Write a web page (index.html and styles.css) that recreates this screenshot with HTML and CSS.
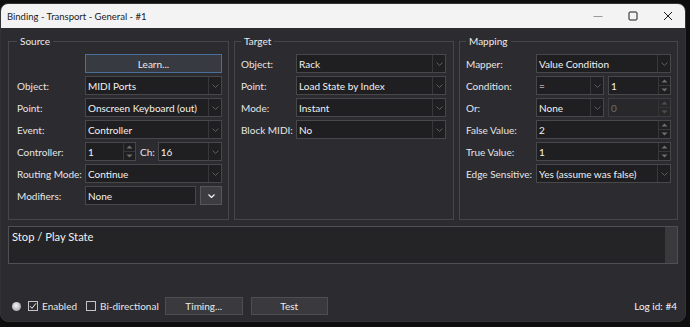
FILE: index.html
```html
<!DOCTYPE html>
<html>
<head>
<meta charset="utf-8">
<link rel="stylesheet" href="styles.css">
</head>
<body>
<div class="window">
  <div class="titlebar">
    <span class="title">Binding - Transport - General - #1</span>
    <div class="caption-buttons">
      <span class="cap-btn"><svg width="10" height="10" viewBox="0 0 10 10"><path d="M0.5 5.5h9" stroke="#9a9a9a" stroke-width="1"/></svg></span>
      <span class="cap-btn"><svg width="10" height="10" viewBox="0 0 10 10"><rect x="1" y="1" width="8" height="8" rx="1" fill="none" stroke="#1a1a1a" stroke-width="1"/></svg></span>
      <span class="cap-btn"><svg width="10" height="10" viewBox="0 0 10 10"><path d="M1 1l8 8M9 1l-8 8" stroke="#1a1a1a" stroke-width="1"/></svg></span>
    </div>
  </div>
  <div class="content">
    <div class="groups">
      <fieldset class="group g-source">
        <legend>Source</legend>
        <div class="form">
          <span></span>
          <div class="btn learn">Learn...</div>
          <span class="lbl">Object:</span>
          <div class="combo"><span class="val">MIDI Ports</span><span class="arrow"><svg width="7" height="4" viewBox="0 0 7 4"><path d="M0.5 0.5L3.5 3.5L6.5 0.5" fill="none" stroke="#5e5e5e"/></svg></span></div>
          <span class="lbl">Point:</span>
          <div class="combo"><span class="val">Onscreen Keyboard (out)</span><span class="arrow"><svg width="7" height="4" viewBox="0 0 7 4"><path d="M0.5 0.5L3.5 3.5L6.5 0.5" fill="none" stroke="#5e5e5e"/></svg></span></div>
          <span class="lbl">Event:</span>
          <div class="combo"><span class="val">Controller</span><span class="arrow"><svg width="7" height="4" viewBox="0 0 7 4"><path d="M0.5 0.5L3.5 3.5L6.5 0.5" fill="none" stroke="#5e5e5e"/></svg></span></div>
          <span class="lbl">Controller:</span>
          <div class="split">
            <div class="spin w-ctrl"><span class="val">1</span><span class="spin-btns"><span class="up"><svg width="7" height="4" viewBox="0 0 7 4"><path d="M0.5 3.5L3.5 0.5L6.5 3.5Z" fill="#6e6e6e"/></svg></span><span class="down"><svg width="7" height="4" viewBox="0 0 7 4"><path d="M0.5 0.5L3.5 3.5L6.5 0.5Z" fill="#6e6e6e"/></svg></span></span></div>
            <span class="lbl ch">Ch:</span>
            <div class="combo grow"><span class="val">16</span><span class="arrow"><svg width="7" height="4" viewBox="0 0 7 4"><path d="M0.5 0.5L3.5 3.5L6.5 0.5" fill="none" stroke="#5e5e5e"/></svg></span></div>
          </div>
          <span class="lbl">Routing Mode:</span>
          <div class="combo"><span class="val">Continue</span><span class="arrow"><svg width="7" height="4" viewBox="0 0 7 4"><path d="M0.5 0.5L3.5 3.5L6.5 0.5" fill="none" stroke="#5e5e5e"/></svg></span></div>
          <span class="lbl">Modifiers:</span>
          <div class="split">
            <div class="field grow"><span class="val">None</span></div>
            <div class="btn drop"><svg width="7" height="4" viewBox="0 0 7 4"><path d="M0.5 0.5L3.5 3.5L6.5 0.5" fill="none" stroke="#f0f0f0" stroke-width="1.2"/></svg></div>
          </div>
        </div>
      </fieldset>
      <fieldset class="group g-target">
        <legend>Target</legend>
        <div class="form">
          <span class="lbl">Object:</span>
          <div class="combo"><span class="val">Rack</span><span class="arrow"><svg width="7" height="4" viewBox="0 0 7 4"><path d="M0.5 0.5L3.5 3.5L6.5 0.5" fill="none" stroke="#5e5e5e"/></svg></span></div>
          <span class="lbl">Point:</span>
          <div class="combo"><span class="val">Load State by Index</span><span class="arrow"><svg width="7" height="4" viewBox="0 0 7 4"><path d="M0.5 0.5L3.5 3.5L6.5 0.5" fill="none" stroke="#5e5e5e"/></svg></span></div>
          <span class="lbl">Mode:</span>
          <div class="combo"><span class="val">Instant</span><span class="arrow"><svg width="7" height="4" viewBox="0 0 7 4"><path d="M0.5 0.5L3.5 3.5L6.5 0.5" fill="none" stroke="#5e5e5e"/></svg></span></div>
          <span class="lbl">Block MIDI:</span>
          <div class="combo"><span class="val">No</span><span class="arrow"><svg width="7" height="4" viewBox="0 0 7 4"><path d="M0.5 0.5L3.5 3.5L6.5 0.5" fill="none" stroke="#5e5e5e"/></svg></span></div>
        </div>
      </fieldset>
      <fieldset class="group g-mapping">
        <legend>Mapping</legend>
        <div class="form">
          <span class="lbl">Mapper:</span>
          <div class="combo"><span class="val">Value Condition</span><span class="arrow"><svg width="7" height="4" viewBox="0 0 7 4"><path d="M0.5 0.5L3.5 3.5L6.5 0.5" fill="none" stroke="#5e5e5e"/></svg></span></div>
          <span class="lbl">Condition:</span>
          <div class="split">
            <div class="combo w-small"><span class="val">=</span><span class="arrow"><svg width="7" height="4" viewBox="0 0 7 4"><path d="M0.5 0.5L3.5 3.5L6.5 0.5" fill="none" stroke="#5e5e5e"/></svg></span></div>
            <div class="spin grow"><span class="val">1</span><span class="spin-btns"><span class="up"><svg width="7" height="4" viewBox="0 0 7 4"><path d="M0.5 3.5L3.5 0.5L6.5 3.5Z" fill="#6e6e6e"/></svg></span><span class="down"><svg width="7" height="4" viewBox="0 0 7 4"><path d="M0.5 0.5L3.5 3.5L6.5 0.5Z" fill="#6e6e6e"/></svg></span></span></div>
          </div>
          <span class="lbl">Or:</span>
          <div class="split">
            <div class="combo w-small"><span class="val">None</span><span class="arrow"><svg width="7" height="4" viewBox="0 0 7 4"><path d="M0.5 0.5L3.5 3.5L6.5 0.5" fill="none" stroke="#5e5e5e"/></svg></span></div>
            <div class="spin grow disabled"><span class="val">0</span><span class="spin-btns"><span class="up"><svg width="7" height="4" viewBox="0 0 7 4"><path d="M0.5 3.5L3.5 0.5L6.5 3.5Z" fill="#4e4e4e"/></svg></span><span class="down"><svg width="7" height="4" viewBox="0 0 7 4"><path d="M0.5 0.5L3.5 3.5L6.5 0.5Z" fill="#4e4e4e"/></svg></span></span></div>
          </div>
          <span class="lbl">False Value:</span>
          <div class="spin"><span class="val">2</span><span class="spin-btns"><span class="up"><svg width="7" height="4" viewBox="0 0 7 4"><path d="M0.5 3.5L3.5 0.5L6.5 3.5Z" fill="#6e6e6e"/></svg></span><span class="down"><svg width="7" height="4" viewBox="0 0 7 4"><path d="M0.5 0.5L3.5 3.5L6.5 0.5Z" fill="#6e6e6e"/></svg></span></span></div>
          <span class="lbl">True Value:</span>
          <div class="spin"><span class="val">1</span><span class="spin-btns"><span class="up"><svg width="7" height="4" viewBox="0 0 7 4"><path d="M0.5 3.5L3.5 0.5L6.5 3.5Z" fill="#6e6e6e"/></svg></span><span class="down"><svg width="7" height="4" viewBox="0 0 7 4"><path d="M0.5 0.5L3.5 3.5L6.5 0.5Z" fill="#6e6e6e"/></svg></span></span></div>
          <span class="lbl">Edge Sensitive:</span>
          <div class="combo"><span class="val">Yes (assume was false)</span><span class="arrow"><svg width="7" height="4" viewBox="0 0 7 4"><path d="M0.5 0.5L3.5 3.5L6.5 0.5" fill="none" stroke="#5e5e5e"/></svg></span></div>
        </div>
      </fieldset>
    </div>
    <div class="desc">
      <span class="desc-text">Stop / Play State</span>
      <span class="scrollbar"></span>
    </div>
    <div class="footer">
      <span class="led"></span>
      <span class="check on"><svg width="8" height="8" viewBox="0 0 8 8"><path d="M1 4.2L3 6.3L7 1.3" fill="none" stroke="#f0f0f0" stroke-width="1"/></svg></span>
      <span class="check-lbl">Enabled</span>
      <span class="check bidir"></span>
      <span class="check-lbl">Bi-directional</span>
      <div class="btn foot-btn timing">Timing...</div>
      <div class="btn foot-btn test">Test</div>
      <span class="logid">Log id: #4</span>
    </div>
  </div>
</div>
</body>
</html>
```

FILE: styles.css
```css
* { box-sizing: border-box; }
html, body { margin: 0; padding: 0; background: #0e0e0f; }
body {
  width: 690px;
  height: 327px;
  overflow: hidden;
  font-family: Lato, "Noto Sans", sans-serif;
  font-size: 10px;
  color: #e6e6e6;
}
.window {
  margin: 3px 4px 0 0;
  width: 686px;
  height: 319px;
  border: 1px solid #333336;
  border-radius: 8px;
  overflow: hidden;
  background: #2c2b30;
  display: flex;
  flex-direction: column;
}
.titlebar {
  flex: none;
  height: 24px;
  background: #f3f3f3;
  color: #1b1b1b;
  display: flex;
  align-items: center;
}
.title { padding-left: 6px; font-size: 9.5px; }
.caption-buttons { margin-left: auto; display: flex; height: 100%; }
.cap-btn { width: 35px; display: flex; align-items: center; justify-content: center; }
.content {
  flex: 1;
  display: flex;
  flex-direction: column;
  padding: 6px 7px 6px 7px;
}
.groups {
  display: grid;
  grid-template-columns: 221px 220px 219px;
  column-gap: 5px;
}
.group {
  margin: 0;
  min-width: 0;
  border: 1px solid #47474b;
  padding: 6px 6px 14px 6px;
}
.g-source { padding-left: 8px; }
.group legend {
  padding: 0 3px;
  line-height: 14px;
  color: #ececec;
}
.form {
  display: grid;
  grid-auto-rows: 19px;
  row-gap: 3px;
  align-items: stretch;
}
.g-source .form { grid-template-columns: 68px 137px; }
.g-target .form { grid-template-columns: 55px 150px; }
.g-mapping .form { grid-template-columns: 70px 135px; }
.lbl { display: flex; align-items: center; white-space: nowrap; }
.combo, .spin, .field {
  display: flex;
  align-items: stretch;
  background: #1f1f21;
  border: 1px solid #48484b;
  min-width: 0;
}
.val {
  flex: 1;
  display: flex;
  align-items: center;
  padding-left: 2px;
  white-space: nowrap;
  overflow: hidden;
  color: #f2f2f2;
}
.arrow {
  width: 13px;
  border-left: 1px solid #38383b;
  display: flex;
  align-items: center;
  justify-content: center;
}
.spin-btns {
  width: 12px;
  border-left: 1px solid #38383b;
  display: flex;
  flex-direction: column;
}
.spin-btns .up, .spin-btns .down {
  flex: 1;
  display: flex;
  align-items: center;
  justify-content: center;
}
.spin-btns .up { border-bottom: 1px solid #38383b; }
.spin.disabled { background: #28282b; border-color: #3d3d40; }
.spin.disabled .val { color: #6c6c6c; }
.spin.disabled .spin-btns, .spin.disabled .spin-btns .up { border-color: #333336; }
.split { display: flex; align-items: stretch; min-width: 0; }
.grow { flex: 1; }
.w-ctrl { width: 51px; flex: none; }
.ch { padding: 0 3px 0 4px; }
.w-small { width: 68px; flex: none; margin-right: 4px; }
.btn {
  display: flex;
  align-items: center;
  justify-content: center;
  background: #3a3a3e;
  border: 1px solid #4e4e52;
  color: #ececec;
}
.learn {
  background: #373a41;
  border-color: #4a6f99;
}
.drop {
  width: 22px;
  margin-left: 4px;
  background: #3d3d41;
  border-color: #57575b;
}
.desc {
  margin-top: 6px;
  height: 38px;
  display: flex;
  background: #242426;
  border: 1px solid #505054;
}
.desc-text {
  flex: 1;
  padding: 2px 0 0 3px;
  font-size: 11.2px;
  line-height: 15px;
  color: #f0f0f0;
}
.scrollbar { width: 12px; background: #3a3a3d; }
.footer {
  margin-top: auto;
  height: 18px;
  display: flex;
  align-items: center;
}
.led {
  width: 9px;
  height: 9px;
  margin-left: 4px;
  border-radius: 50%;
  background: radial-gradient(circle at 45% 40%, #f4f4f4 0%, #c8c8c8 45%, #8a8a8a 100%);
}
.check {
  width: 10px;
  height: 10px;
  border: 1px solid #c4c4c4;
  display: flex;
  align-items: center;
  justify-content: center;
}
.check.on { margin-left: 7px; }
.check.bidir { margin-left: 9px; }
.check-lbl { margin-left: 4px; }
.foot-btn { height: 18px; }
.timing { width: 78px; margin-left: 6px; }
.test { width: 77px; margin-left: 8px; }
.logid { margin-left: auto; margin-right: 1px; color: #f2f2f2; }
```
